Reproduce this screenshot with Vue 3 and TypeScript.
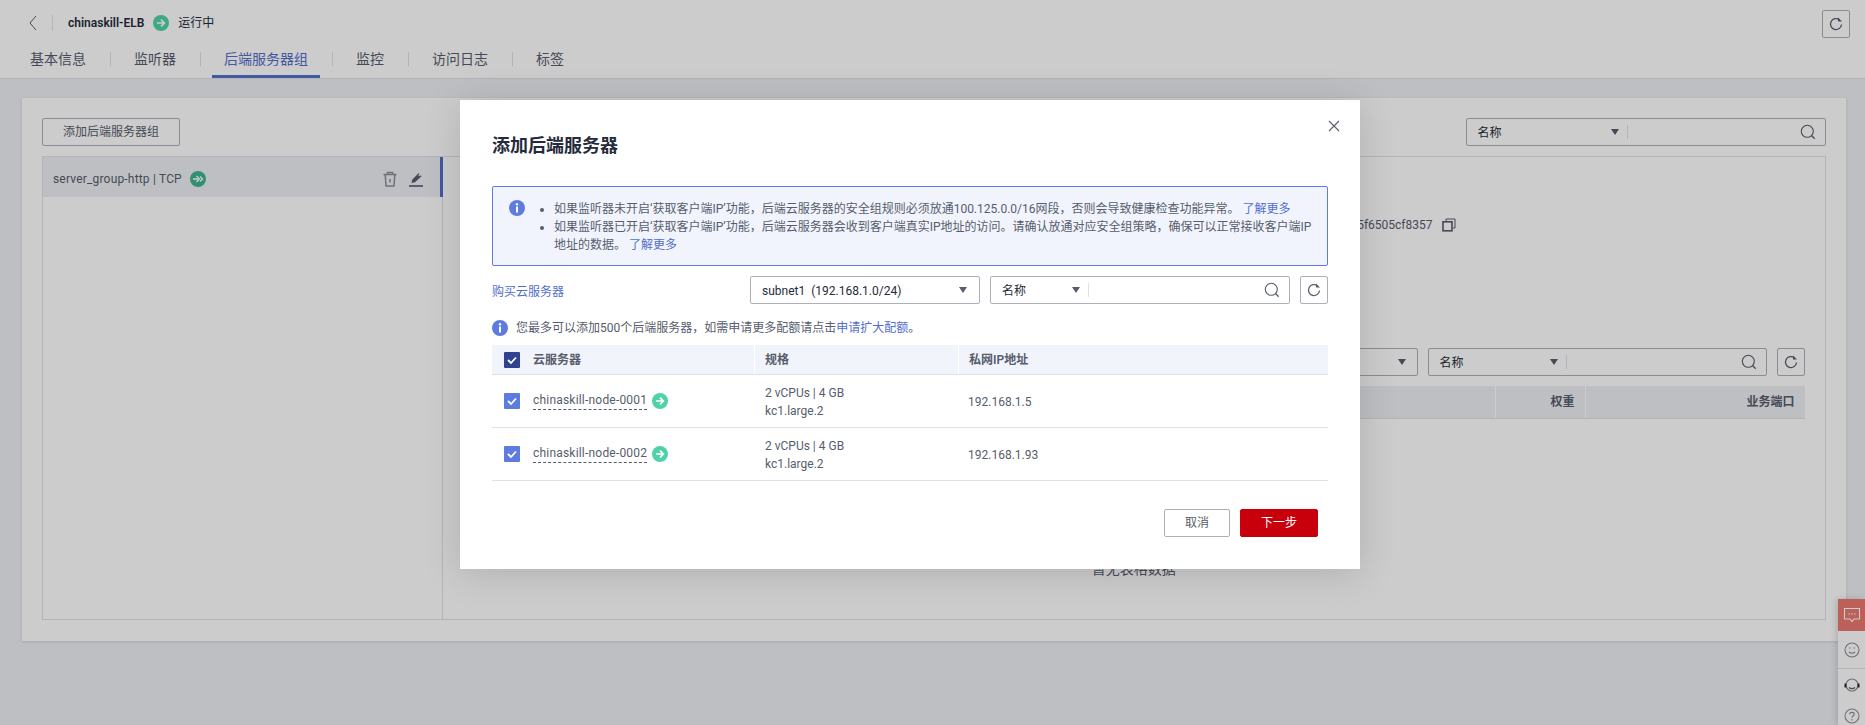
<template>
  <div class="page">
    <header class="head">
      <div class="head-top">
        <svg class="back" width="10" height="16" viewBox="0 0 10 16"><path d="M8 1 2 8l6 7" fill="none" stroke="#575d6c" stroke-width="1" /></svg>
        <span class="head-line"></span>
        <span class="elb-name">chinaskill-ELB</span>
        <svg class="st" width="16" height="16" viewBox="0 0 16 16"><circle cx="8" cy="8" r="8" fill="#4fd2a8" /><path d="M4 8h7M8 4.600 11.400 8 8 11.400" fill="none" stroke="#fff" stroke-width="1.600" /></svg>
        <span class="elb-state">运行中</span>
        <button class="icon-btn head-refresh"><svg width="16" height="16" viewBox="0 0 16 16"><path d="M13.500 8.500A5.500 5.500 0 1 1 11.500 3.800" fill="none" stroke="#575d6c" stroke-width="1.300" /><path d="M10 1.500v4h4z" fill="#575d6c" /></svg></button>
      </div>
      <nav class="tabs">
        <template v-for="(t, i) in tabs" :key="t">
          <span v-if="i" class="tab-sep"></span>
          <a class="tab" :class="{ on: t === activeTab }">{{ t }}</a>
        </template>
      </nav>
    </header>

    <main class="card">
      <div class="card-bar">
        <button class="btn add-btn">添加后端服务器组</button>
        <div class="search top-search">
          <span class="s-label">名称</span>
          <i class="caret"></i>
          <span class="s-div"></span>
          <svg class="mag" width="16" height="16" viewBox="0 0 16 16"><circle cx="7.300" cy="7.300" r="6" fill="none" stroke="#575d6c" stroke-width="1.100" /><path d="m11.500 11.500 3.200 3.200" stroke="#575d6c" stroke-width="1.300" /></svg>
        </div>
      </div>
      <div class="split">
        <aside class="groups">
          <div class="group on">
            <span class="g-name">server_group-http | TCP</span>
            <svg width="16" height="16" viewBox="0 0 16 16"><circle cx="8" cy="8" r="8" fill="#3fb58f" /><path d="M3 8h5M6.500 5l3 3-3 3M10 5.500 12.500 8 10 10.500" fill="none" stroke="#fff" stroke-width="1.300" /></svg>
            <svg class="g-trash" width="16" height="16" viewBox="0 0 16 16"><path d="M1.500 3.500h13M5.500 3.500V1.500h5v2M3.200 3.500l.8 11.500h8l.8-11.500M8 8v3.500" fill="none" stroke="#8a8e99" stroke-width="1.500" /></svg>
            <svg class="g-edit" width="16" height="16" viewBox="0 0 16 16"><path d="M1 15h14" stroke="#575d6c" stroke-width="1.600" /><path d="m3.500 12 .7-3.300L10.500 2.300l1 1-1.200 1.200.9.900 1.200-1.200 1.100 1.100L7 11.200z" fill="#575d6c" /></svg>
          </div>
        </aside>
        <section class="detail">
          <div class="id-row">
            <span>c21-5f6505cf8357</span>
            <svg width="14" height="14" viewBox="0 0 14 14"><path d="M4 3V1h9v9h-2" fill="none" stroke="#575d6c" stroke-width="1" /><rect x="1" y="3.800" width="9" height="9" fill="none" stroke="#575d6c" stroke-width="1.600" /></svg>
          </div>
          <div class="member-bar">
            <div class="select member-select"><span></span><i class="caret"></i></div>
            <div class="search member-search">
              <span class="s-label">名称</span>
              <i class="caret"></i>
              <span class="s-div"></span>
              <svg class="mag" width="16" height="16" viewBox="0 0 16 16"><circle cx="7.300" cy="7.300" r="6" fill="none" stroke="#575d6c" stroke-width="1.100" /><path d="m11.500 11.500 3.200 3.200" stroke="#575d6c" stroke-width="1.300" /></svg>
            </div>
            <button class="icon-btn"><svg width="16" height="16" viewBox="0 0 16 16"><path d="M13.500 8.500A5.500 5.500 0 1 1 11.500 3.800" fill="none" stroke="#575d6c" stroke-width="1.300" /><path d="M10 1.500v4h4z" fill="#575d6c" /></svg></button>
          </div>
          <div class="member-head">
            <span class="m-fill"></span>
            <span class="m-weight">权重</span>
            <span class="m-port">业务端口</span>
          </div>
          <p class="empty">暂无表格数据</p>
        </section>
      </div>
    </main>

    <aside class="widget">
      <div class="w-chat">
        <svg width="18" height="16" viewBox="0 0 18 16"><path d="M1.500 1.500h15v10.500h-5.500L9 14.500 7 12H1.500z" fill="none" stroke="#fff" stroke-width="1.100" /><path d="M5.500 7h1.500M8.300 7h1.500M11.100 7h1.500" stroke="#fff" stroke-width="1.200" /></svg>
      </div>
      <div class="w-item w-face">
        <svg width="16" height="16" viewBox="0 0 16 16"><circle cx="8" cy="8" r="7" fill="none" stroke="#8a8e99" stroke-width="1.100" /><path d="M5 10c1.500 1.600 4.500 1.600 6 0M5 6h1.500M9.500 6H11" fill="none" stroke="#8a8e99" stroke-width="1.100" /></svg>
      </div>
      <div class="w-item w-head">
        <svg width="18" height="18" viewBox="0 0 18 18"><circle cx="9" cy="8" r="6" fill="none" stroke="#8a8e99" stroke-width="1.100" /><path d="M6 10.500c2 1.500 4 1.500 6 0" fill="none" stroke="#575d6c" stroke-width="1.400" /><rect x="1.500" y="6.500" width="2" height="4" fill="#252b3a" /><rect x="14.500" y="6.500" width="2" height="4" fill="#252b3a" /></svg>
      </div>
      <div class="w-item">
        <svg width="16" height="16" viewBox="0 0 16 16"><circle cx="8" cy="8" r="7" fill="none" stroke="#8a8e99" stroke-width="1.100" /><path d="M5.800 6.200C5.800 3.800 10.200 3.800 10.200 6.200 10.200 7.800 8 7.800 8 9.800M8 11v1.400" fill="none" stroke="#8a8e99" stroke-width="1.100" /></svg>
      </div>
    </aside>

    <div class="mask">
      <div class="dialog">
        <svg class="close" width="12" height="12" viewBox="0 0 12 12"><path d="m1 1 10 10M11 1 1 11" stroke="#575d6c" stroke-width="1.100" /></svg>
        <h2 class="d-title">添加后端服务器</h2>

        <div class="alert">
          <svg class="info" width="16" height="16" viewBox="0 0 16 16"><circle cx="8" cy="8" r="8" fill="#5e7ce0" /><circle cx="8" cy="4.300" r="1.200" fill="#fff" /><rect x="7" y="6.500" width="2" height="6" fill="#fff" /></svg>
          <ul>
            <li>如果监听器未开启‘获取客户端IP’功能，后端云服务器的安全组规则必须放通100.125.0.0/16网段，否则会导致健康检查功能异常。 <a>了解更多</a></li>
            <li>如果监听器已开启‘获取客户端IP’功能，后端云服务器会收到客户端真实IP地址的访问。请确认放通对应安全组策略，确保可以正常接收客户端IP<br />地址的数据。 <a>了解更多</a></li>
          </ul>
        </div>

        <div class="tools">
          <a class="buy">购买云服务器</a>
          <div class="select subnet"><span>subnet1&nbsp; (192.168.1.0/24)</span><i class="caret"></i></div>
          <div class="search d-search">
            <span class="s-label">名称</span>
            <i class="caret"></i>
            <span class="s-div"></span>
            <svg class="mag" width="16" height="16" viewBox="0 0 16 16"><circle cx="7.300" cy="7.300" r="6" fill="none" stroke="#575d6c" stroke-width="1.100" /><path d="m11.500 11.500 3.200 3.200" stroke="#575d6c" stroke-width="1.300" /></svg>
          </div>
          <button class="icon-btn"><svg width="16" height="16" viewBox="0 0 16 16"><path d="M13.500 8.500A5.500 5.500 0 1 1 11.500 3.800" fill="none" stroke="#575d6c" stroke-width="1.300" /><path d="M10 1.500v4h4z" fill="#575d6c" /></svg></button>
        </div>

        <div class="quota">
          <svg width="16" height="16" viewBox="0 0 16 16"><circle cx="8" cy="8" r="8" fill="#5e7ce0" /><circle cx="8" cy="4.300" r="1.200" fill="#fff" /><rect x="7" y="6.500" width="2" height="6" fill="#fff" /></svg>
          <span>您最多可以添加500个后端服务器，如需申请更多配额请点击<a>申请扩大配额</a>。</span>
        </div>

        <div class="grid-row grid-head">
          <div class="c1">
            <span class="cb dark"><svg width="16" height="16" viewBox="0 0 16 16"><path d="m4 8 3 3 5-5.500" fill="none" stroke="#fff" stroke-width="1.800" /></svg></span>
            <span>云服务器</span>
          </div>
          <div class="c2">规格</div>
          <div class="c3">私网IP地址</div>
        </div>
        <div v-for="s in servers" :key="s.name" class="grid-row">
          <div class="c1">
            <span class="cb"><svg width="16" height="16" viewBox="0 0 16 16"><path d="m4 8 3 3 5-5.500" fill="none" stroke="#fff" stroke-width="1.800" /></svg></span>
            <span class="srv">{{ s.name }}</span>
            <svg class="srv-st" width="16" height="16" viewBox="0 0 16 16"><circle cx="8" cy="8" r="8" fill="#4fd2a8" /><path d="M4 8h7M8 4.600 11.400 8 8 11.400" fill="none" stroke="#fff" stroke-width="1.600" /></svg>
          </div>
          <div class="c2">{{ s.spec }}<br />{{ s.flavor }}</div>
          <div class="c3">{{ s.ip }}</div>
        </div>

        <div class="d-foot">
          <button class="btn cancel">取消</button>
          <button class="btn next">下一步</button>
        </div>
      </div>
    </div>
  </div>
</template>

<script setup lang="ts">
interface Server { name: string; spec: string; flavor: string; ip: string }

const tabs = ['基本信息', '监听器', '后端服务器组', '监控', '访问日志', '标签']
const activeTab = '后端服务器组'

const servers: Server[] = [
  { name: 'chinaskill-node-0001', spec: '2 vCPUs | 4 GB', flavor: 'kc1.large.2', ip: '192.168.1.5' },
  { name: 'chinaskill-node-0002', spec: '2 vCPUs | 4 GB', flavor: 'kc1.large.2', ip: '192.168.1.93' },
]
</script>

<style>
html, body { margin: 0; overflow: hidden; }
</style>

<style scoped>
.page { position: relative; height: 725px; overflow: hidden; background: #eeeff4; color: #252b3a; font: 12px/18px Roboto, "Noto Sans CJK SC", sans-serif; }
a { color: #526ecc; }
button { font: inherit; color: inherit; padding: 0; }

.head { height: 79px; box-sizing: border-box; background: #fff; border-bottom: 1px solid #dfe1e6; }
.head-top { display: flex; align-items: center; height: 40px; padding: 5px 15px 0 28px; box-sizing: border-box; }
.head-line { width: 1px; height: 16px; background: #dfe1e6; margin: 0 15px 0 14px; }
.elb-name { font-weight: 600; margin-right: 9px; }
.elb-state { margin-left: 9px; }
.head-refresh { margin-left: auto; margin-top: 3px; border-color: #8a8e99; }
.tabs { display: flex; align-items: center; height: 38px; }
.tab { display: block; padding: 0 12px; margin: 0 12px; font-size: 14px; line-height: 38px; height: 38px; box-sizing: border-box; color: #575d6c; }
.tab:first-child { margin-left: 18px; }
.tab.on { color: #526ecc; border-bottom: 3px solid #526ecc; }
.tab-sep { width: 1px; height: 14px; background: #dfe1e6; margin-right: -1px; }

.card { margin: 19px 19.500px 0 22px; height: 543px; box-sizing: border-box; padding: 20px; background: #fff; box-shadow: 0 1px 3px rgba(0, 0, 0, .12); }
.card-bar { display: flex; justify-content: space-between; height: 28px; }
.btn { height: 28px; box-sizing: border-box; border: 1px solid #adb0b8; border-radius: 2px; background: #fff; }
.add-btn { width: 138px; color: #575d6c; }

.search, .select { display: flex; align-items: center; height: 28px; box-sizing: border-box; border: 1px solid #adb0b8; border-radius: 2px; background: #fff; }
.s-label { flex: 0 0 auto; width: 133px; margin-left: 11px; padding-top: 1px; }
.caret { flex: 0 0 auto; width: 0; height: 0; border: 4.500px solid transparent; border-top: 6px solid #575d6c; border-bottom: 0; }
.s-div { width: 1px; height: 14px; background: #dfe1e6; margin-left: 8px; }
.mag { margin-left: auto; margin-right: 9px; }
.top-search { width: 360px; }
.icon-btn { display: flex; align-items: center; justify-content: center; width: 28px; height: 28px; box-sizing: border-box; border: 1px solid #adb0b8; border-radius: 2px; background: #fff; }

.split { display: flex; height: 464px; margin-top: 10px; border: 1px solid #dfe1e6; box-sizing: border-box; }
.groups { width: 399px; flex: 0 0 auto; border-right: 1px solid #dfe1e6; }
.group { display: flex; align-items: center; height: 40px; box-sizing: border-box; padding: 3px 0 0 10px; background: #eeeff4; border-right: 3px solid #526ecc; margin-right: -1px; }
.g-name { margin-right: 8px; color: #575d6c; letter-spacing: .18px; }
.g-trash { margin-left: auto; margin-right: 10px; }
.g-edit { margin-right: 16px; }

.detail { flex: 1; min-width: 0; display: flex; flex-direction: column; padding: 0 20px; }
.id-row { display: flex; align-items: center; gap: 9px; justify-content: flex-end; margin: 59px 349px 0 0; color: #575d6c; }
.member-bar { display: flex; gap: 10px; justify-content: flex-end; margin-top: 114px; }
.member-select { width: 300px; justify-content: flex-end; padding-right: 11px; }
.member-search { width: 339px; }
.member-search .s-label { width: 110px; }
.member-head { display: flex; height: 33px; margin-top: 10px; background: #eeeff4; border-bottom: 1px solid #dfe1e6; box-sizing: border-box; font-weight: 600; color: #575d6c; line-height: 32px; text-align: right; }
.m-fill { flex: 1; }
.m-weight { width: 79px; padding-right: 10px; border-left: 1px solid #fff; }
.m-port { width: 209px; padding-right: 10px; border-left: 1px solid #fff; }
.empty { margin: 141px 0 0; text-align: center; font-size: 14px; color: #575d6c; }

.widget { position: absolute; right: 0; top: 599px; width: 27px; height: 126px; background: #fff; box-shadow: -2px 0 6px rgba(0, 0, 0, .14); }
.w-chat { height: 32px; background: #ec7870; display: flex; align-items: center; justify-content: center; }
.w-item { height: 31px; display: flex; align-items: center; justify-content: center; }
.w-face { height: 38px; border-bottom: 1px solid #dfe1e6; box-sizing: border-box; }
.w-head { padding-top: 3px; box-sizing: border-box; }

.mask { position: absolute; inset: 0; background: rgba(0, 0, 0, .2); }
.dialog { position: relative; box-sizing: border-box; width: 900px; height: 469px; margin: 100px 0 0 460px; padding: 34px 32px 0; background: #fff; box-shadow: 0 4px 36px rgba(0, 0, 0, .14); }
.close { position: absolute; right: 20px; top: 20px; }
.d-title { margin: 0; font-size: 18px; line-height: 24px; font-weight: 600; }

.alert { display: flex; box-sizing: border-box; height: 80px; margin-top: 28px; padding: 13px 10px 0 16px; border: 1px solid #5e7ce0; border-radius: 2px; background: #f1f4fd; color: #575d6c; }
.info { flex: 0 0 auto; }
.alert ul { margin: 0; padding: 0 0 0 29px; }

.tools { display: flex; align-items: center; margin-top: 10px; }
.buy { flex: 1; padding-top: 3px; }
.subnet { width: 230px; padding: 0 12px 0 11px; justify-content: space-between; }
.subnet span { padding-top: 1px; }
.d-search { width: 300px; margin: 0 10px; }
.d-search .s-label { width: 70px; }

.quota { display: flex; align-items: center; gap: 8px; margin-top: 15px; height: 18px; color: #575d6c; }

.grid-row { display: grid; grid-template-columns: 262px 204px 1fr; height: 53px; border-bottom: 1px solid #dfe1e6; box-sizing: border-box; align-items: center; }
.grid-head { height: 30px; margin-top: 8px; background: #f1f4fb; font-weight: 600; color: #575d6c; }
.grid-head .c2, .grid-head .c3 { height: 100%; display: flex; align-items: center; border-left: 1px solid #fff; padding: 1px 0 0 10px; box-sizing: border-box; }
.grid-head .c1 > span:last-child { padding-top: 1px; }
.c1 { display: flex; align-items: center; }
.c2, .c3 { padding: 1px 0 0 10px; color: #575d6c; }
.c2 { padding-left: 11px; }
.cb { flex: 0 0 auto; width: 16px; height: 16px; margin: 0 13px 0 12px; background: #5e7ce0; border-radius: 1px; }
.cb svg { display: block; }
.cb.dark { background: #31428e; }
.srv { color: #575d6c; border-bottom: 1px dashed #575d6c; line-height: 17px; letter-spacing: .2px; }
.srv-st { margin-left: 5px; }

.d-foot { display: flex; justify-content: flex-end; gap: 10px; margin-top: 28px; padding-right: 10px; }
.cancel { width: 66px; color: #575d6c; }
.next { width: 78px; background: #c7000b; border-color: #c7000b; color: #fff; }
</style>
